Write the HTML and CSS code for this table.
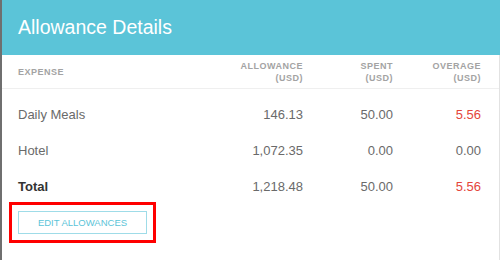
FILE: index.html
```html
<!DOCTYPE html>
<html lang="en">
<head>
<meta charset="utf-8">
<title>Allowance Details</title>
<link rel="stylesheet" href="styles.css">
</head>
<body>
<div class="card">
  <div class="card-header">
    <h1 class="title">Allowance Details</h1>
  </div>
  <div class="card-body">
    <div class="row head-row">
      <div class="cell label">EXPENSE</div>
      <div class="cell num">ALLOWANCE<br>(USD)</div>
      <div class="cell num">SPENT<br>(USD)</div>
      <div class="cell num">OVERAGE<br>(USD)</div>
    </div>
    <div class="rows">
      <div class="row data-row">
        <div class="cell label">Daily Meals</div>
        <div class="cell num">146.13</div>
        <div class="cell num">50.00</div>
        <div class="cell num over">5.56</div>
      </div>
      <div class="row data-row">
        <div class="cell label">Hotel</div>
        <div class="cell num">1,072.35</div>
        <div class="cell num">0.00</div>
        <div class="cell num">0.00</div>
      </div>
      <div class="row data-row total">
        <div class="cell label">Total</div>
        <div class="cell num">1,218.48</div>
        <div class="cell num">50.00</div>
        <div class="cell num over">5.56</div>
      </div>
    </div>
    <div class="actions">
      <button class="btn-edit" type="button">EDIT ALLOWANCES</button>
    </div>
  </div>
</div>
</body>
</html>
```
FILE: styles.css
```css
html, body {
  margin: 0;
  padding: 0;
  background: #ffffff;
}

body {
  font-family: "Liberation Sans", Arial, sans-serif;
  width: 500px;
  height: 260px;
  overflow: hidden;
}

.card {
  box-sizing: border-box;
  width: 500px;
  height: 260px;
  border-left: 2px solid #6f6f6f;
  display: flex;
  flex-direction: column;
}

.card-header {
  box-sizing: border-box;
  height: 55px;
  background: #5bc4d8;
  display: flex;
  align-items: center;
  padding: 0 0 2px 16px;
}

.title {
  margin: 0;
  font-size: 19.5px;
  font-weight: normal;
  color: #ffffff;
  line-height: 24px;
}

.card-body {
  flex: 1;
  border-right: 1px solid #e2e2e2;
}

.row {
  display: grid;
  grid-template-columns: 1fr 90px 90px 88px;
  padding: 0 18px 0 16px;
}

.head-row {
  align-items: center;
  padding-top: 5px;
  padding-bottom: 4px;
  border-bottom: 1px solid #efefef;
  font-size: 9px;
  font-weight: bold;
  letter-spacing: 0.5px;
  line-height: 12px;
  color: #a3a3a3;
}

.num {
  text-align: right;
}

.rows {
  padding-top: 8px;
}

.data-row {
  font-size: 13px;
  line-height: 16px;
  color: #6a6a6a;
  padding-top: 10px;
  padding-bottom: 10px;
}

.data-row.total .label {
  font-weight: bold;
  color: #333333;
}

.over {
  color: #e4453b;
}

.actions {
  padding: 6px 0 0 16px;
}

.btn-edit {
  box-sizing: border-box;
  width: 129px;
  height: 23px;
  padding: 0;
  background: #ffffff;
  border: 1px solid #9fdce8;
  border-radius: 0;
  color: #5bc4d8;
  font-family: "Liberation Sans", Arial, sans-serif;
  font-size: 9.5px;
  line-height: 21px;
  text-align: center;
  outline: 3px solid #ff0000;
  outline-offset: 6px;
}
```
